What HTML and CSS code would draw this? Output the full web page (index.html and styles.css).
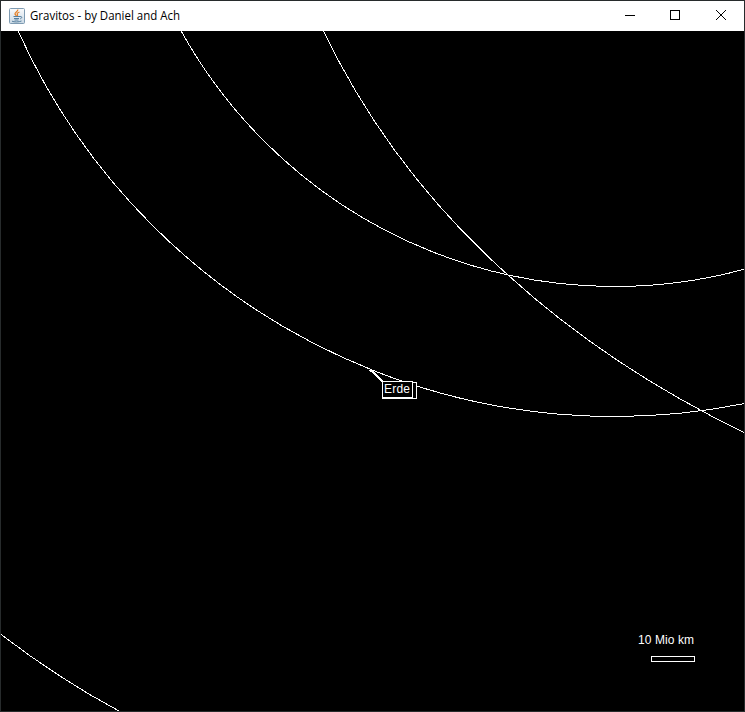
FILE: index.html
```
<!DOCTYPE html>
<html lang="en">
<head>
<meta charset="utf-8">
<title>Gravitos - by Daniel and Ach</title>
<link rel="stylesheet" href="styles.css">
</head>
<body>
<div class="window">
  <header class="titlebar">
    <svg class="app-icon" viewBox="0 0 16 16">
      <defs><linearGradient id="tile" x1="0" y1="0" x2="0" y2="1"><stop offset="0" stop-color="#fafbfc"/><stop offset="1" stop-color="#c9d8e4"/></linearGradient></defs>
      <rect x=".5" y=".5" width="15" height="15" rx="1" fill="url(#tile)" stroke="#7e9bb2"/>
      <path d="M8.700 1.500C9.500 3.600 5.500 4.300 6 6c.2.8 1.200 1.200 1.200 2M10.500 4C8.500 4.800 7.700 5.500 8.500 6.700c.3.500 0 .9-.4 1.300" fill="none" stroke="#e58128" stroke-width="1.300"/>
      <path d="M4.500 8.500h6.500M5 10.500h5M5.500 12h4M3 13.200c2 1 7 1 9.500-.2M11 8.600c2.500-.5 2.200 1.800.2 2.200" fill="none" stroke="#567f9e"/>
    </svg>
    <h1 class="title"><svg width="170" height="20"><text x="0" y="14" textLength="150" lengthAdjust="spacingAndGlyphs">Gravitos - by Daniel and Ach</text></svg></h1>
    <nav class="controls">
      <svg class="control" viewBox="0 0 45 29"><path d="M7 14.500h10"/></svg>
      <svg class="control" viewBox="0 0 45 29"><path d="M7.500 9.500h9v9h-9z"/></svg>
      <svg class="control close" viewBox="0 0 37 29"><path d="M8 9l10 10M18 9L8 19"/></svg>
    </nav>
  </header>
  <main class="space">
    <svg class="orbits" viewBox="1 31 743 680">
      <circle cx="614.500" cy="-208.500" r="495"/>
      <circle cx="614.200" cy="-237" r="653.500"/>
      <path d="M323.500 31Q389.800 169.500 508.500 275.500Q609 367 744 432.500"/>
      <path d="M1 634.500Q60 679.500 119 711"/>
      <path class="label-box" d="M384.500 382.500h32v16h-32z"/>
      <path d="M369 370.500h4M370.500 369v3"/>
      <path class="leader" d="M371 370l11.500 11.500"/>
      <path class="label-box" d="M382.500 381.500h30v16h-30z"/>
      <path d="M382 398.500h35"/>
      <text x="384" y="393" textLength="26">Erde</text>
      <text x="638" y="644" textLength="56">10 Mio km</text>
      <path d="M651.500 656.500h43v5h-43z"/>
    </svg>
  </main>
</div>
</body>
</html>
```
FILE: styles.css
```
* { box-sizing: border-box; }
body { margin: 0; overflow: hidden; }
.window { width: 745px; height: 712px; border: 1px solid #272b2c; background: #000; display: flex; flex-direction: column; }
.titlebar { height: 30px; flex: none; display: flex; align-items: center; padding-left: 8px; background: #fff; }
.app-icon { width: 16px; height: 16px; display: block; }
.title { margin: 0 0 0 5px; height: 20px; line-height: 0; font-size: 12px; font-weight: 400; }
.title svg { display: block; overflow: visible; }
.title text { font: 12px "Open Sans", "Noto Sans", sans-serif; fill: #000; }
.controls { display: flex; margin-left: auto; height: 29px; align-self: flex-start; }
.control { width: 45px; height: 29px; fill: none; stroke: #000; shape-rendering: crispEdges; }
.close { width: 37px; margin-right: -1px; }
.close path { shape-rendering: auto; }
.space { flex: 1; min-height: 0; }
.orbits { display: block; width: 743px; height: 680px; fill: none; stroke: #fff; stroke-width: 1; shape-rendering: crispEdges; }
.orbits .label-box { fill: #000; }
.orbits .leader { stroke-width: 1.5; }
.orbits text { font: 12px "Liberation Sans", sans-serif; fill: #fff; stroke: none; }
```
